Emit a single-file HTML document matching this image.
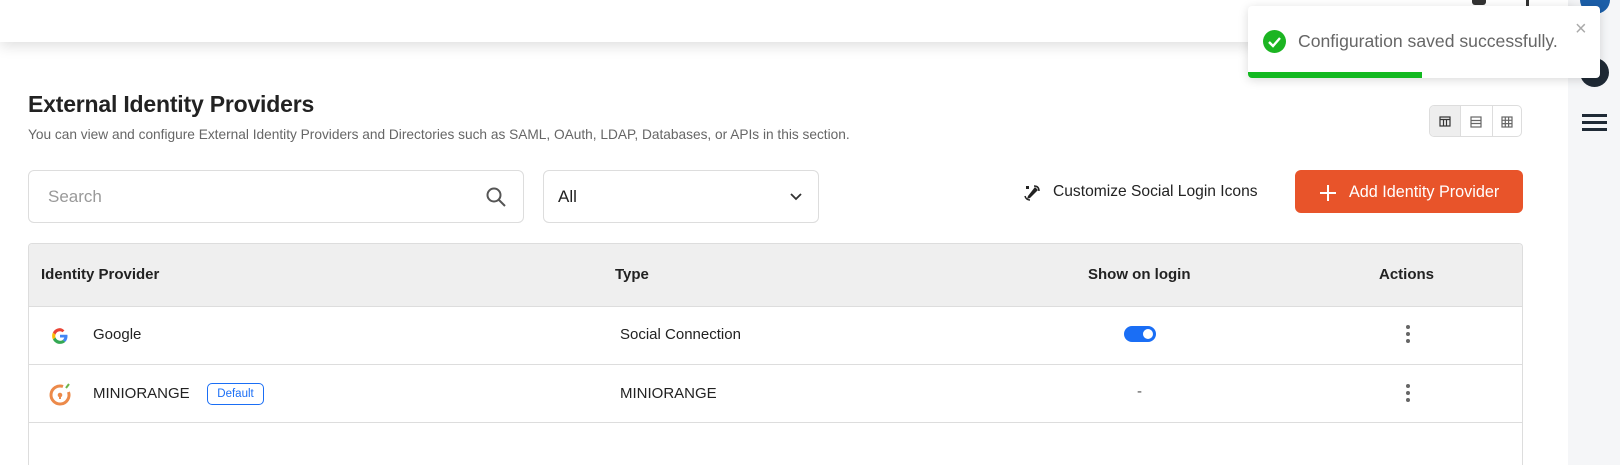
<!DOCTYPE html>
<html style="width:1620px;height:465px;overflow:hidden"><head><meta charset="utf-8"><style>
*{box-sizing:border-box;margin:0;padding:0}
body{width:1620px;height:465px;overflow:hidden;background:#fff;font-family:"Liberation Sans",sans-serif;color:#222;position:relative}
.hdr{position:absolute;left:0;top:0;width:1568px;height:42px;background:#fff;box-shadow:0 4px 14px rgba(0,0,0,.13);z-index:2}
.side{position:absolute;left:1568px;top:0;width:52px;height:465px;background:#f5f6f8}
.abs{position:absolute}
h1{position:absolute;left:28px;top:91px;font-size:23px;font-weight:bold;color:#222;letter-spacing:-.2px}
.sub{position:absolute;left:28px;top:127px;font-size:13.7px;color:#666}
.box{position:absolute;border:1px solid #ddd;border-radius:6px;background:#fff}
.tbl{position:absolute;left:28px;top:243px;width:1495px;height:222px;border:1px solid #ddd;border-bottom:none;border-radius:4px 4px 0 0;overflow:hidden}
.th{position:absolute;left:0;top:0;width:100%;height:63px;background:#efefef;border-bottom:1px solid #ddd}
.row{position:absolute;left:0;width:100%;border-bottom:1px solid #ddd}
.t{position:absolute;font-size:15px;white-space:nowrap}
.b{font-weight:bold;font-size:15px}
.dots{position:absolute;width:4px}
.dots i{display:block;width:4px;height:4px;border-radius:2px;background:#666;margin-bottom:3px}
</style></head><body>
<div class="hdr">
 <div class="abs" style="left:1472px;top:0;width:14px;height:5px;background:#333;border-radius:0 0 3px 3px"></div>
 <div class="abs" style="left:1526px;top:0;width:3px;height:6px;background:#333"></div>
</div>
<div class="side"></div>
<div class="abs" style="left:1580px;top:-14px;width:30px;height:28px;border-radius:50%;background:#1b5ea8;z-index:3"></div>
<div class="abs" style="left:1580px;top:58px;width:29px;height:29px;border-radius:50%;background:#1f2a36"></div>
<div class="abs" style="left:1582px;top:114px;width:25px;height:3px;background:#1f2a36;box-shadow:0 7px 0 #1f2a36,0 14px 0 #1f2a36"></div>

<h1>External Identity Providers</h1>
<div class="sub">You can view and configure External Identity Providers and Directories such as SAML, OAuth, LDAP, Databases, or APIs in this section.</div>

<div class="box" style="left:1429px;top:105px;width:93px;height:32px;border-radius:5px;overflow:hidden">
 <div class="abs" style="left:0;top:0;width:31px;height:32px;background:#eee;border-right:1px solid #ddd"></div>
 <div class="abs" style="left:62px;top:0;width:1px;height:32px;background:#ddd"></div>
 <svg class="abs" style="left:0;top:0" width="93" height="32" fill="none" stroke="#333" stroke-width="1.2">
  <rect x="10" y="11" width="10" height="9"/><line x1="10" y1="13.5" x2="20" y2="13.5"/><line x1="13.5" y1="13.5" x2="13.5" y2="20"/><line x1="16.5" y1="13.5" x2="16.5" y2="20"/>
  <rect x="41" y="11" width="10" height="10" stroke="#666"/><line x1="41" y1="14.5" x2="51" y2="14.5" stroke="#666"/><line x1="41" y1="17.5" x2="51" y2="17.5" stroke="#666"/>
  <rect x="72" y="11" width="10" height="10" stroke="#666"/><line x1="72" y1="14.3" x2="82" y2="14.3" stroke="#666"/><line x1="72" y1="17.6" x2="82" y2="17.6" stroke="#666"/><line x1="75.3" y1="11" x2="75.3" y2="21" stroke="#666"/><line x1="78.6" y1="11" x2="78.6" y2="21" stroke="#666"/>
 </svg>
</div>

<div class="box" style="left:28px;top:170px;width:496px;height:53px">
 <div class="t" style="left:19px;top:16px;font-size:17px;color:#999">Search</div>
 <svg class="abs" style="left:456px;top:15px" width="22" height="22" fill="none" stroke="#555" stroke-width="2"><circle cx="9" cy="9" r="6.5"/><line x1="14" y1="14" x2="20" y2="20"/></svg>
</div>
<div class="box" style="left:543px;top:170px;width:276px;height:53px">
 <div class="t" style="left:14px;top:16px;font-size:17px;color:#222">All</div>
 <svg class="abs" style="left:245px;top:21px" width="14" height="10" fill="none" stroke="#333" stroke-width="1.8"><path d="M2 2l5 5 5-5"/></svg>
</div>

<svg class="abs" style="left:1023px;top:184px" width="18" height="18" fill="#222"><path d="M3 2l3 0 0 3-3 0zM12 3l3 3-8 8-3 1 1-3z"/><path d="M2 12q1 4 5 4" stroke="#222" stroke-width="1.5" fill="none"/><path d="M11 2q5 0 5 5" stroke="#222" stroke-width="1.5" fill="none"/></svg>
<div class="t" style="left:1053px;top:183px;color:#222;font-size:15.6px">Customize Social Login Icons</div>
<div class="abs" style="left:1295px;top:170px;width:228px;height:43px;background:#e8542a;border-radius:6px"></div>
<svg class="abs" style="left:1319px;top:184px" width="18" height="18" stroke="#fff" stroke-width="2"><line x1="9" y1="1" x2="9" y2="17"/><line x1="1" y1="9" x2="17" y2="9"/></svg>
<div class="t" style="left:1349px;top:183px;color:#fff;font-size:16.2px">Add Identity Provider</div>

<div class="tbl">
 <div class="th">
  <div class="t b" style="left:12px;top:22px">Identity Provider</div>
  <div class="t b" style="left:586px;top:22px">Type</div>
  <div class="t b" style="left:1059px;top:22px">Show on login</div>
  <div class="t b" style="left:1350px;top:22px">Actions</div>
 </div>
 <div class="row" style="top:63px;height:58px">
  <svg class="abs" style="left:22px;top:20px" width="18" height="18" viewBox="0 0 48 48"><path fill="#4285F4" d="M44 24.5c0-1.5-.1-2.6-.4-3.8H24v7.2h11.3c-.5 2.8-2 5-4.4 6.6l6.8 5.3C41.600 36.200 44 30.900 44 24.5z"/><path fill="#34A853" d="M24 45c5.7 0 10.500-1.900 14-5.200l-6.800-5.300c-1.900 1.300-4.300 2.100-7.200 2.100-5.500 0-10.200-3.700-11.900-8.800l-7 5.400C8.600 40.100 15.700 45 24 45z"/><path fill="#FBBC05" d="M12.100 27.800c-.4-1.300-.7-2.600-.7-3.800s.3-2.600.7-3.800l-7-5.400C3.700 17.600 3 20.700 3 24s.7 6.400 2.100 9.200z"/><path fill="#EA4335" d="M24 11.400c3.200 0 5.400 1.400 6.700 2.600l5.100-4.900C32.500 6.200 28.600 3 24 3 15.700 3 8.600 7.900 5.100 14.800l7 5.400c1.700-5.100 6.400-8.800 11.900-8.800z"/></svg>
  <div class="t" style="left:64px;top:19px">Google</div>
  <div class="t" style="left:591px;top:19px">Social Connection</div>
  <div class="abs" style="left:1095px;top:19px;width:32px;height:16px;border-radius:8px;background:#1a6ef5"><div class="abs" style="left:19px;top:3px;width:10px;height:10px;border-radius:5px;background:#fff"></div></div>
  <div class="dots" style="left:1377px;top:18px"><i></i><i></i><i></i></div>
 </div>
 <div class="row" style="top:121px;height:58px">
  <svg class="abs" style="left:19px;top:17px" width="24" height="24" fill="none"><path d="M15 4.5A9 9 0 1 0 20.5 10" stroke="#ec8a4a" stroke-width="3"/><circle cx="12" cy="13" r="2.3" fill="#ec8a4a"/><rect x="11" y="13" width="2" height="4" fill="#ec8a4a"/><path d="M18 6l3-4" stroke="#6cb44a" stroke-width="2"/></svg>
  <div class="t" style="left:64px;top:20px">MINIORANGE</div>
  <div class="abs" style="left:178px;top:18px;width:57px;height:22px;border:1px solid #1a6ef5;border-radius:5px;color:#1a6ef5;font-size:11.5px;text-align:center;line-height:20px">Default</div>
  <div class="t" style="left:591px;top:20px">MINIORANGE</div>
  <div class="t" style="left:1108px;top:18px;color:#555">-</div>
  <div class="dots" style="left:1377px;top:19px"><i></i><i></i><i></i></div>
 </div>
</div>

<div class="abs" style="left:1248px;top:6px;width:352px;height:72px;background:#fff;border-radius:4px;box-shadow:0 2px 10px rgba(0,0,0,.15);overflow:hidden;z-index:5">
 <svg class="abs" style="left:15px;top:24px" width="23" height="23"><circle cx="11.5" cy="11.5" r="11.5" fill="#1cb522"/><path d="M6 12l4 4 7-8" stroke="#fff" stroke-width="2.4" fill="none"/></svg>
 <div class="t" style="left:50px;top:25px;font-size:17.6px;color:#666">Configuration saved successfully.</div>
 <div class="t" style="left:327px;top:12px;font-size:20px;color:#aaa">×</div>
 <div class="abs" style="left:0;top:66px;width:174px;height:6px;background:#12b920"></div>
</div>
</body></html>
